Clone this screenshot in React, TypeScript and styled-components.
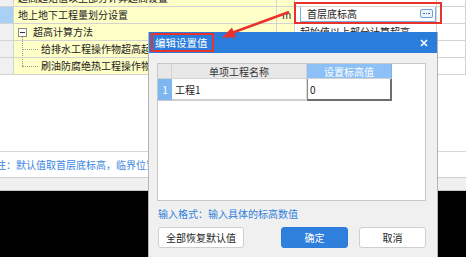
import React from 'react';
import styled, { createGlobalStyle } from 'styled-components';

const GlobalStyle = createGlobalStyle`
  html, body {
    margin: 0;
    padding: 0;
    background: #fff;
  }
  body {
    font-family: "Noto Sans CJK SC", "Noto Sans", sans-serif;
    font-size: 10px;
    color: #222;
  }
`;

const Page = styled.div`
  position: relative;
  width: 466px;
  height: 257px;
  overflow: hidden;
  display: flex;
  flex-direction: column;
  background: #fff;
`;

const Sheet = styled.div`
  display: grid;
  grid-template-columns: 14px 263px 18px 142px 1fr;
  grid-auto-rows: 17px;
  margin-top: -10px;
  flex: none;
`;

const Cell = styled.div<{ $bg?: string; $pad?: number }>`
  display: flex;
  align-items: center;
  box-sizing: border-box;
  padding-left: ${p => p.$pad ?? 4}px;
  background: ${p => p.$bg ?? '#fff'};
  border-right: 1px solid #d3d3d3;
  border-bottom: 1px solid #d3d3d3;
  white-space: nowrap;
  overflow: hidden;
  line-height: 1;
`;

const Toggle = styled.span`
  position: relative;
  flex: none;
  width: 9px;
  height: 9px;
  box-sizing: border-box;
  border: 1px solid #8a8a8a;
  background: #fff;
  margin-right: 6px;
  &::before {
    content: '';
    position: absolute;
    left: 1px;
    right: 1px;
    top: 3px;
    border-top: 1px solid #333;
  }
  &::after {
    content: '';
    position: absolute;
    left: 3px;
    top: 8px;
    height: 5px;
    border-left: 1px dotted #999;
  }
`;

const Branch = styled.span<{ $last?: boolean }>`
  position: relative;
  flex: none;
  align-self: stretch;
  width: 20px;
  margin-right: 3px;
  &::before {
    content: '';
    position: absolute;
    left: 4px;
    top: -1px;
    bottom: ${p => (p.$last ? '50%' : '-1px')};
    border-left: 1px dotted #9a9a9a;
  }
  &::after {
    content: '';
    position: absolute;
    left: 4px;
    right: 0;
    top: 50%;
    border-top: 1px dotted #9a9a9a;
  }
`;

const ValueInput = styled.div`
  flex: 1;
  display: flex;
  align-items: center;
  justify-content: space-between;
  height: 17px;
  margin-top: -3px;
  box-sizing: border-box;
  border: 1px solid #7eb0e2;
  background: #fff;
  padding: 0 2px 0 6px;
`;

const MoreButton = styled.span`
  width: 13px;
  height: 9px;
  box-sizing: border-box;
  border: 1px solid #6a9fd6;
  border-radius: 2px;
  background: #edf4fc;
  display: flex;
  align-items: center;
  justify-content: center;
  gap: 1px;
  & > i {
    width: 1.5px;
    height: 1.5px;
    background: #3a76c0;
  }
`;

const Filler = styled.div`
  height: 76px;
  flex: none;
`;

const NoteRow = styled.div`
  height: 27px;
  flex: none;
  box-sizing: border-box;
  border-top: 1px solid #d6d6d6;
  border-bottom: 1px solid #cfcfcf;
  display: flex;
  align-items: center;
  color: #3a86e2;
  white-space: nowrap;
  overflow: hidden;
`;

const NoteText = styled.span`
  margin-left: -14px;
`;

const Band = styled.div`
  height: 12px;
  flex: none;
  background: #f0f0f0;
  border-bottom: 1px solid #c8c8c8;
`;

const Dark = styled.div`
  flex: 1;
  background: #000;
`;

const Dialog = styled.div`
  position: absolute;
  left: 148px;
  top: 32px;
  width: 290px;
  height: 226px;
  box-sizing: border-box;
  border-left: 1px solid #b4b4b4;
  border-right: 1px solid #b4b4b4;
  display: flex;
  flex-direction: column;
  background: #f0f0f0;
`;

const TitleBar = styled.div`
  height: 21px;
  flex: none;
  background: #2a7dda;
  display: flex;
  align-items: center;
  justify-content: space-between;
  padding: 0 9px 0 2px;
  color: #fff;
`;

const TitleText = styled.span`
  display: flex;
  align-items: center;
  height: 19px;
  box-sizing: border-box;
  border: 2px solid #e8322c;
  padding: 0 4px 0 2px;
  font-size: 10.5px;
`;

const Body = styled.div`
  flex: 1;
  display: flex;
  flex-direction: column;
  padding: 10px 11px 0 8px;
`;

const TableBox = styled.div`
  height: 138px;
  box-sizing: border-box;
  background: #fff;
  border: 1px solid #c6c6c6;
  display: grid;
  grid-template-columns: 14px 135px 85px;
  grid-template-rows: 15px 22px;
  align-content: start;
`;

const HeadCell = styled.div<{ $active?: boolean }>`
  display: flex;
  align-items: center;
  justify-content: center;
  box-sizing: border-box;
  background: ${p => (p.$active ? '#8cc0f6' : '#e8e8e8')};
  color: ${p => (p.$active ? '#fff' : '#333')};
  border-right: 1px solid ${p => (p.$active ? '#7fb2e8' : '#d2d2d2')};
  border-bottom: 1px solid #d2d2d2;
`;

const IndexCell = styled.div`
  display: flex;
  align-items: center;
  justify-content: center;
  background: #7db6f0;
  color: #fff;
  border-bottom: 1px solid #c8c8c8;
`;

const DataCell = styled.div<{ $editing?: boolean }>`
  display: flex;
  align-items: center;
  box-sizing: border-box;
  padding-left: ${p => (p.$editing ? 2 : 3)}px;
  border-bottom: ${p => (p.$editing ? '2px solid #6e6e6e' : '2px solid #cfcfcf')};
  border-right: ${p => (p.$editing ? '2px solid #6e6e6e' : '1px solid #dedede')};
  border-left: ${p => (p.$editing ? '1px solid #8a8a8a' : 'none')};
`;

const Hint = styled.div`
  margin-top: 6px;
  height: 13px;
  line-height: 13px;
  color: #2f7fdc;
  padding-left: 1px;
`;

const Buttons = styled.div`
  margin-top: 7px;
  display: flex;
  align-items: center;
  gap: 11px;
  padding-left: 1px;
`;

const Button = styled.button<{ $primary?: boolean; $width: number }>`
  width: ${p => p.$width}px;
  height: 21px;
  box-sizing: border-box;
  border-radius: 3px;
  border: 1px solid ${p => (p.$primary ? '#2a7dda' : '#cfcfcf')};
  background: ${p => (p.$primary ? '#2f80dc' : '#fff')};
  color: ${p => (p.$primary ? '#fff' : '#222')};
  font-family: inherit;
  font-size: 10px;
  padding: 0;
  cursor: pointer;
`;

const Spacer = styled.span`
  flex: 1;
`;

const Highlight = styled.div`
  position: absolute;
  left: 294px;
  top: 2px;
  width: 148px;
  height: 22px;
  box-sizing: border-box;
  border: 2px solid #e8322c;
  pointer-events: none;
`;

const Arrow = styled.svg`
  position: absolute;
  left: 0;
  top: 0;
  pointer-events: none;
`;

const rows = [
  { name: '超高起始值以上部分计算超高设置', value: '', level: 0 },
  { name: '地上地下工程量划分设置', unit: 'm', value: 'input', level: 0, selected: true },
  { name: '超高计算方法', value: '起始值以上部分计算超高', level: 0, toggle: true },
  { name: '给排水工程操作物超高起始值', value: '', level: 1 },
  { name: '刷油防腐绝热工程操作物超高起始值', value: '', level: 1, last: true },
];

export default function App() {
  return (
    <>
      <GlobalStyle />
      <Page>
        <Sheet>
          {rows.map((r, i) => (
            <React.Fragment key={i}>
              <Cell $bg={r.selected ? '#a9d0f5' : '#f0f0f0'} />
              <Cell $bg="#ffffc8">
                {r.toggle && <Toggle />}
                {r.level === 1 && <Branch $last={r.last} />}
                {r.name}
              </Cell>
              <Cell $bg="#ffffc8" $pad={5}>{r.unit}</Cell>
              <Cell $pad={5}>
                {r.value === 'input' ? (
                  <ValueInput>
                    首层底标高
                    <MoreButton><i /><i /><i /></MoreButton>
                  </ValueInput>
                ) : (
                  r.value
                )}
              </Cell>
              <Cell />
            </React.Fragment>
          ))}
        </Sheet>
        <Filler />
        <NoteRow>
          <NoteText>备注：默认值取首层底标高，临界位置以上部分计算超高</NoteText>
        </NoteRow>
        <Band />
        <Dark />

        <Highlight />

        <Dialog>
          <TitleBar>
            <TitleText>编辑设置值</TitleText>
            <svg width="8" height="8" viewBox="0 0 8 8">
              <path d="M1 1L7 7M7 1L1 7" stroke="#fff" strokeWidth="1.6" />
            </svg>
          </TitleBar>
          <Body>
            <TableBox>
              <HeadCell />
              <HeadCell>单项工程名称</HeadCell>
              <HeadCell $active>设置标高值</HeadCell>
              <IndexCell>1</IndexCell>
              <DataCell>工程1</DataCell>
              <DataCell $editing>0</DataCell>
            </TableBox>
            <Hint>输入格式：输入具体的标高数值</Hint>
            <Buttons>
              <Button $width={86}>全部恢复默认值</Button>
              <Spacer />
              <Button $primary $width={67}>确定</Button>
              <Button $width={67}>取消</Button>
            </Buttons>
          </Body>
        </Dialog>

        <Arrow width="466" height="257" viewBox="0 0 466 257">
          <line x1="289" y1="12" x2="233" y2="32.5" stroke="#e8322c" strokeWidth="2.4" />
          <polygon points="222,37.5 236,37.6 232,27.5" fill="#e8322c" />
        </Arrow>
      </Page>
    </>
  );
}
